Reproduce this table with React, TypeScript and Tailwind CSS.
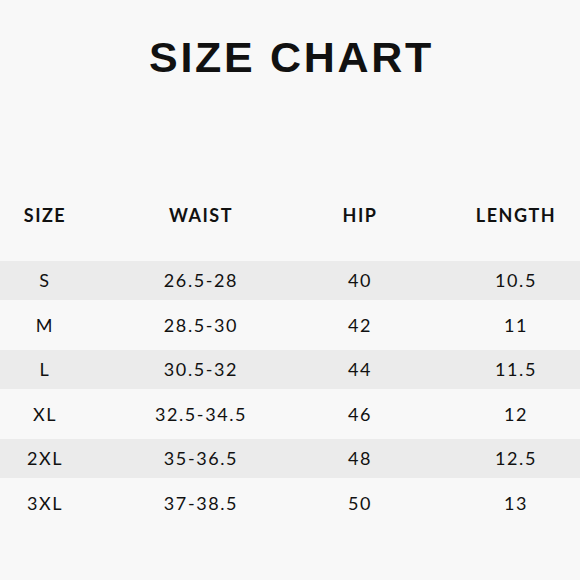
export default function App() {
  const rows = [
    ["S", "26.5-28", "40", "10.5"],
    ["M", "28.5-30", "42", "11"],
    ["L", "30.5-32", "44", "11.5"],
    ["XL", "32.5-34.5", "46", "12"],
    ["2XL", "35-36.5", "48", "12.5"],
    ["3XL", "37-38.5", "50", "13"],
  ];
  const cols = ["w-[90px]", "w-[222px]", "w-[96px]", "w-[216px]"];
  return (
    <div className="w-[580px] h-[580px] bg-[#f8f8f8] text-[#111] overflow-hidden" style={{ fontFamily: "Lato, 'Liberation Sans', sans-serif" }}>
      <div className="pt-[31px] h-[190px] text-center">
        <div className="text-[43px] font-bold tracking-[2.7px] leading-[52px] ml-[3px]" style={{ fontFamily: "'Liberation Sans', Arial, sans-serif" }}>SIZE CHART</div>
      </div>
      <div className="flex h-[50px] items-center text-[18px] font-bold tracking-[1.5px]">
        {["SIZE", "WAIST", "HIP", "LENGTH"].map((h, i) => (
          <div key={h} className={`${cols[i]} shrink-0 text-center`}>{h}</div>
        ))}
      </div>
      <div className="h-[21px]" />
      <div className="flex flex-col">
        {rows.map((r, ri) => (
          <div key={ri} className={`flex items-center text-[18px] tracking-[1.6px] ${ri % 2 === 0 ? "h-[39px] bg-[#ebebeb]" : "h-[50px]"}`}>
            {r.map((c, i) => (
              <div key={i} className={`${cols[i]} shrink-0 text-center`}>{c}</div>
            ))}
          </div>
        ))}
      </div>
    </div>
  );
}
